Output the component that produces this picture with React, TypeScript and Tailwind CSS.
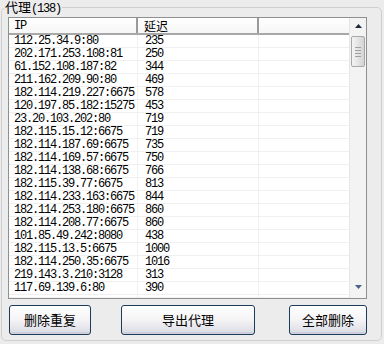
import React from 'react';

const rows: [string, string][] = [
    ['112.25.34.9:80', '235'],
    ['202.171.253.108:81', '250'],
    ['61.152.108.187:82', '344'],
    ['211.162.209.90:80', '469'],
    ['182.114.219.227:6675', '578'],
    ['120.197.85.182:15275', '453'],
    ['23.20.103.202:80', '719'],
    ['182.115.15.12:6675', '719'],
    ['182.114.187.69:6675', '735'],
    ['182.114.169.57:6675', '750'],
    ['182.114.138.68:6675', '766'],
    ['182.115.39.77:6675', '813'],
    ['182.114.233.163:6675', '844'],
    ['182.114.253.180:6675', '860'],
    ['182.114.208.77:6675', '860'],
    ['101.85.49.242:8080', '438'],
    ['182.115.13.5:6675', '1000'],
    ['182.114.250.35:6675', '1016'],
    ['219.143.3.210:3128', '313'],
    ['117.69.139.6:80', '390'],
    ['', ''],
];

function Arrow({ down }: { down?: boolean }) {
    return (
        <svg width="7" height="4" viewBox="0 0 7 4">
            {down ? (
                <polygon points="0,0 7,0 3.5,4" fill="#4d6185" />
            ) : (
                <polygon points="0,4 7,4 3.5,0" fill="#1e2a3a" />
            )}
        </svg>
    );
}

function Button({ label, className }: { label: string; className: string }) {
    return (
        <button
            className={`h-[30px] rounded-[3px] border border-[#1c3d5a] bg-gradient-to-b from-white via-[#f4f4f6] to-[#d9d9e3] text-[13px] text-black font-['Noto_Sans_CJK_SC',sans-serif] shadow-[inset_0_-2px_0_#cfcfdb] ${className}`}
        >
            {label}
        </button>
    );
}

export default function App() {
    return (
        <div className="w-[384px] h-[344px] bg-[#ececec] overflow-hidden font-['Liberation_Mono','Noto_Sans_CJK_SC',monospace] text-[12px] text-black">
            <fieldset className="ml-[1px] w-[381px] h-[341px] border border-[#cfcfcf] rounded-[5px] p-0">
                <legend className="ml-[2px] px-[1px] h-[14px] leading-[14px] text-[13px] text-black">
                    <span className="font-['Noto_Sans_CJK_SC',sans-serif]">代理</span>
                    <span className="font-['Liberation_Mono',monospace] text-[12px] tracking-[-1.2px]">(138)</span>
                </legend>

                <div className="pl-[6px] pt-[3px]">
                    {/* list view */}
                    <div className="w-[359px] h-[282px] border border-[#8e8f8f] bg-white flex overflow-hidden">
                        <div className="flex-1 flex flex-col">
                            <div className="h-[17px] flex bg-gradient-to-b from-white to-[#f6f6f6] border-b-2 border-[#a8a8a8]">
                                <div className="w-[129px] pl-[5px] leading-[16px] border-r-2 border-[#9a9a9a] tracking-[-1.2px]">IP</div>
                                <div className="w-[121px] pl-[6px] leading-[16px] border-r-2 border-[#9a9a9a] text-[12px] font-['Noto_Sans_CJK_SC',sans-serif]">延迟</div>
                                <div className="flex-1" />
                            </div>
                            {rows.map(([ip, delay], i) => (
                                <div key={i} className="h-[13px] flex border-b border-[#f0f0f0] leading-[13px] tracking-[-1.2px]">
                                    <div className="w-[129px] pl-[5px] border-r border-[#f0f0f0]">{ip}</div>
                                    <div className="w-[121px] pl-[7px] border-r border-[#f0f0f0]">{delay}</div>
                                    <div className="flex-1" />
                                </div>
                            ))}
                        </div>

                        {/* scrollbar */}
                        <div className="w-[17px] bg-[#f3f3f3] border-l border-[#e6e6e6] flex flex-col">
                            <div className="h-[16px] flex items-center justify-center">
                                <Arrow />
                            </div>
                            <div className="mt-[2px] mx-[1px] h-[31px] rounded-[2px] border border-[#a8a8a8] bg-gradient-to-r from-[#f4f4f4] to-[#d4d4d4] flex flex-col items-center justify-center gap-[2px]">
                                <div className="w-[6px] h-px bg-[#a0a0a0]" />
                                <div className="w-[6px] h-px bg-[#a0a0a0]" />
                                <div className="w-[6px] h-px bg-[#a0a0a0]" />
                                <div className="w-[6px] h-px bg-[#a0a0a0]" />
                            </div>
                            <div className="flex-1" />
                            <div className="h-[17px] flex items-center justify-center mb-[3px]">
                                <Arrow down />
                            </div>
                        </div>
                    </div>

                    <div className="mt-[6px] flex">
                        <Button label="删除重复" className="ml-[1px] w-[82px]" />
                        <Button label="导出代理" className="ml-[30px] w-[134px]" />
                        <Button label="全部删除" className="ml-[34px] w-[78px]" />
                    </div>
                </div>
            </fieldset>
        </div>
    );
}
